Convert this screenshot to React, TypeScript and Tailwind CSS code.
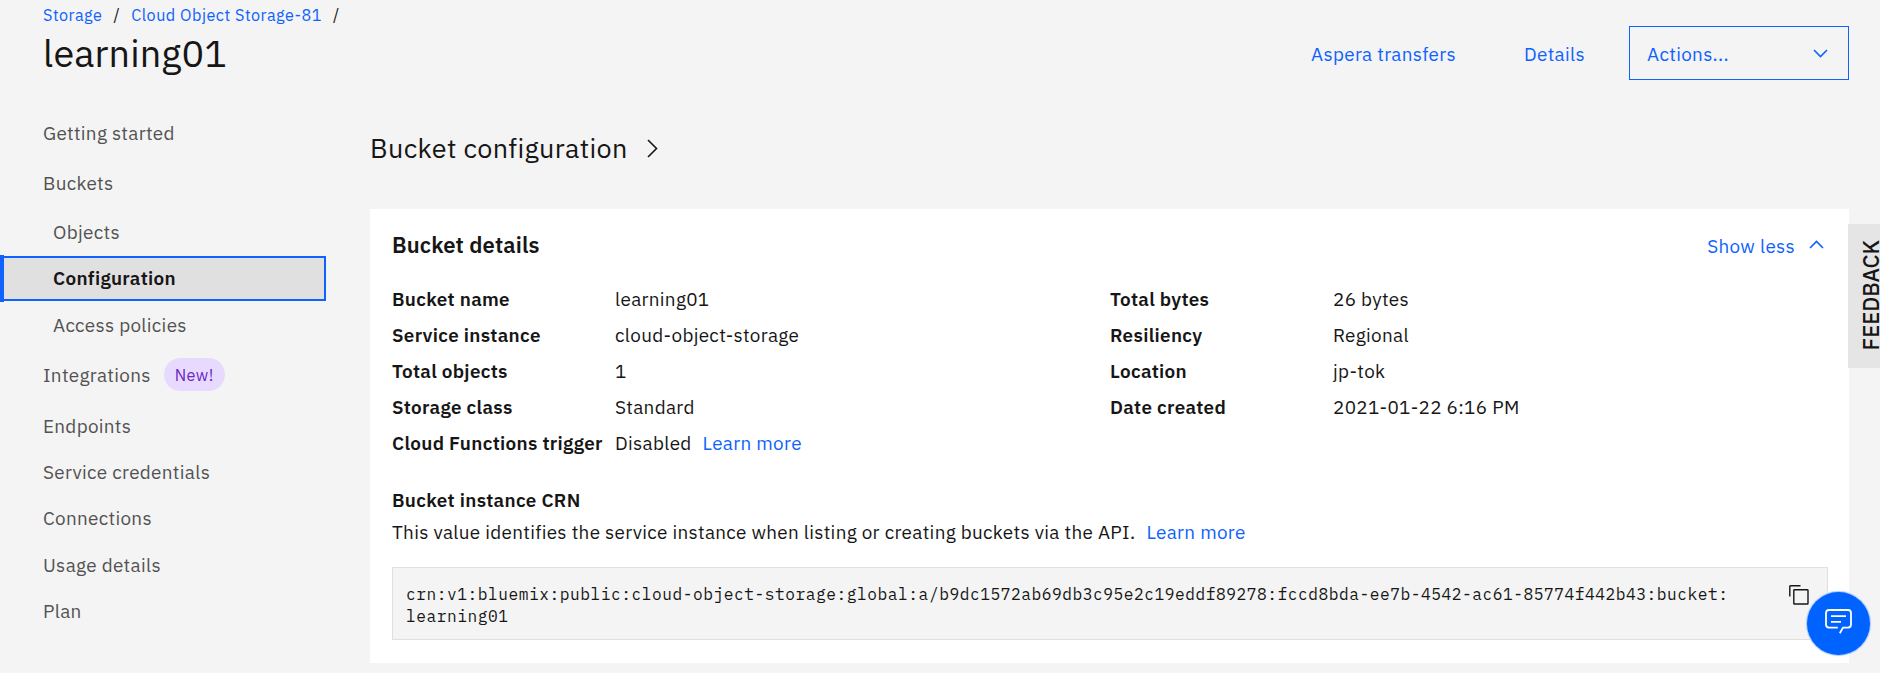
import { ReactNode } from 'react';

const SANS = "font-['IBM_Plex_Sans','Open_Sans',sans-serif]";

function Label({ children }: { children: ReactNode }) {
  return <dt className="w-[223px] shrink-0 font-semibold">{children}</dt>;
}

function Row({ label, children }: { label: string; children: ReactNode }) {
  return (
    <div className="flex h-9 items-center whitespace-nowrap">
      <Label>{label}</Label>
      <dd>{children}</dd>
    </div>
  );
}

function Chevron({ className, points, w, h }: { className: string; points: string; w: number; h: number }) {
  return (
    <svg className={className} width={w} height={h} viewBox={`0 0 ${w} ${h}`} fill="none" stroke="currentColor" strokeWidth="1.6">
      <polyline points={points} />
    </svg>
  );
}

const nav = [
  { text: 'Getting started', cls: 'h-[50px] pl-[43px]' },
  { text: 'Buckets', cls: 'h-[50px] pl-[43px]' },
  { text: 'Objects', cls: 'h-[47px] pl-[53px]' },
  { text: 'Configuration', active: true, cls: '' },
  { text: 'Access policies', cls: 'h-[46px] pl-[53px]' },
  { text: 'Integrations', badge: 'New!', cls: 'h-[54px] pl-[43px]' },
  { text: 'Endpoints', cls: 'h-[47px] pl-[43px]' },
  { text: 'Service credentials', cls: 'h-[46px] pl-[43px]' },
  { text: 'Connections', cls: 'h-[46px] pl-[43px]' },
  { text: 'Usage details', cls: 'h-[47px] pl-[43px]' },
  { text: 'Plan', cls: 'h-[46px] pl-[43px]' },
];

export default function App() {
  return (
    <div className={`relative h-[673px] w-[1880px] overflow-hidden bg-[#f4f4f4] text-[18.9px] leading-[24px] tracking-[0.31px] text-[#161616] ${SANS}`}>
      <header className="flex h-[100px] justify-between pr-[31px]">
        <div className="pl-[43px]">
          <div className="flex h-[30px] items-center gap-[11px] text-[16.2px] tracking-[0.5px] text-[#0f62fe]">
            <a>Storage</a>
            <span className="text-[#161616]">/</span>
            <a>Cloud Object Storage-81</a>
            <span className="text-[#161616]">/</span>
          </div>
          <h1 className="text-[37.8px] leading-[46px] font-normal tracking-[0.12px]">learning01</h1>
        </div>
        <div className="flex items-start pt-[26px] text-[#0f62fe]">
          <a className="mr-[68px] leading-[57px]">Aspera transfers</a>
          <a className="mr-[44px] leading-[57px]">Details</a>
          <button className="flex h-[54px] w-[220px] items-center justify-between border border-[#0f62fe] pr-5 pl-[17px]">
            <span className="pt-px">Actions...</span>
            <Chevron className="" points="1,1 7.5,7.5 14,1" w={15} h={9} />
          </button>
        </div>
      </header>

      <div className="flex">
        <nav className="w-[370px] pt-2 text-[#525252]">
          {nav.map((n) =>
            n.active ? (
              <div key={n.text} className="flex h-[47px] w-[326px] border-l-4 border-[#0f62fe] py-px">
                <div className="flex h-[45px] flex-1 items-center border-y-2 border-r-2 border-[#0f62fe] bg-[#e0e0e0] pb-px pl-[49px] font-semibold text-[#161616]">
                  {n.text}
                </div>
              </div>
            ) : (
              <div key={n.text} className={`flex items-center ${n.cls}`}>
                {n.text}
                {n.badge && (
                  <span className="mb-px ml-[13px] flex h-[33px] w-[61px] items-center justify-center rounded-full bg-[#e8daff] text-[16.2px] tracking-[0.4px] text-[#6929c4]">
                    {n.badge}
                  </span>
                )}
              </div>
            ),
          )}
        </nav>

        <main className="w-[1479px] pt-[30px]">
          <h2 className="flex h-9 items-center text-[27px] tracking-[0.35px]">
            Bucket configuration
            <Chevron className="ml-[19px]" points="1,1 9.5,9.5 1,18" w={11} h={19} />
          </h2>
          <section className="mt-[43px] h-[454px] bg-white px-[22px] pt-[20px]">
            <div className="flex h-8 items-center justify-between">
              <h3 className="text-[22px] font-semibold tracking-[0.13px]">Bucket details</h3>
              <a className="flex items-center gap-[14px] pt-0.5 pr-[3px] text-[#0f62fe]">
                Show less
                <Chevron className="-mt-1" points="1,8 7.5,1.5 14,8" w={15} h={9} />
              </a>
            </div>
            <div className="mt-5 flex">
              <dl className="w-[718px]">
                <Row label="Bucket name">learning01</Row>
                <Row label="Service instance">cloud-object-storage</Row>
                <Row label="Total objects">1</Row>
                <Row label="Storage class">Standard</Row>
                <Row label="Cloud Functions trigger">
                  Disabled<a className="ml-[11px] text-[#0f62fe]">Learn more</a>
                </Row>
              </dl>
              <dl>
                <Row label="Total bytes">26 bytes</Row>
                <Row label="Resiliency">Regional</Row>
                <Row label="Location">jp-tok</Row>
                <Row label="Date created">2021-01-22 6:16 PM</Row>
              </dl>
            </div>
            <h4 className="mt-[27px] h-8 font-semibold">Bucket instance CRN</h4>
            <p className="h-[47px]">
              This value identifies the service instance when listing or creating buckets via the API.
              <a className="ml-[11px] text-[#0f62fe]">Learn more</a>
            </p>
            <div className="flex h-[73px] w-[1436px] justify-between border border-[#e0e0e0] bg-[#f4f4f4] pt-[15px] pr-[18px] pl-[13px]">
              <code className="font-['IBM_Plex_Mono','Liberation_Mono',monospace] text-[16.2px] leading-[22px] tracking-[0.54px]">
                crn:v1:bluemix:public:cloud-object-storage:global:a/b9dc1572ab69db3c95e2c19eddf89278:fccd8bda-ee7b-4542-ac61-85774f442b43:bucket:
                <br />
                learning01
              </code>
              <svg className="mt-0.5" width="20" height="20" viewBox="0 0 20 20" fill="none" stroke="#161616" strokeWidth="1.4">
                <rect x="4.8" y="4.8" width="14.2" height="14.2" rx="0.6" />
                <path d="M0.8 11.5V1.4Q0.8 0.8 1.4 0.8H11.5" />
              </svg>
            </div>
          </section>
        </main>
      </div>

      <div className="absolute top-[224px] right-0 flex h-[144px] w-8 items-center justify-end bg-[#e5e5e5] pb-[2px]">
        <span className="rotate-180 text-[22px] leading-[18px] font-medium tracking-normal [writing-mode:vertical-rl]">FEEDBACK</span>
      </div>

      <button className="absolute top-[592px] left-[1807px] flex size-[63px] items-center justify-center rounded-full bg-[#0062ff] shadow-[0_0_1px_1px_#a6c8ff]">
        <svg className="-mt-1" width="27" height="25" viewBox="0 0 27 25" fill="none" stroke="#fff" strokeWidth="1.8">
          <path d="M12.8 18.6H4Q1 18.6 1 15.6V4Q1 1 4 1H23Q26 1 26 4V15.6Q26 18.6 23 18.6H18L14.8 24.2" />
          <path d="M6 7.2H21M6 12.8H16" />
        </svg>
      </button>
    </div>
  );
}
